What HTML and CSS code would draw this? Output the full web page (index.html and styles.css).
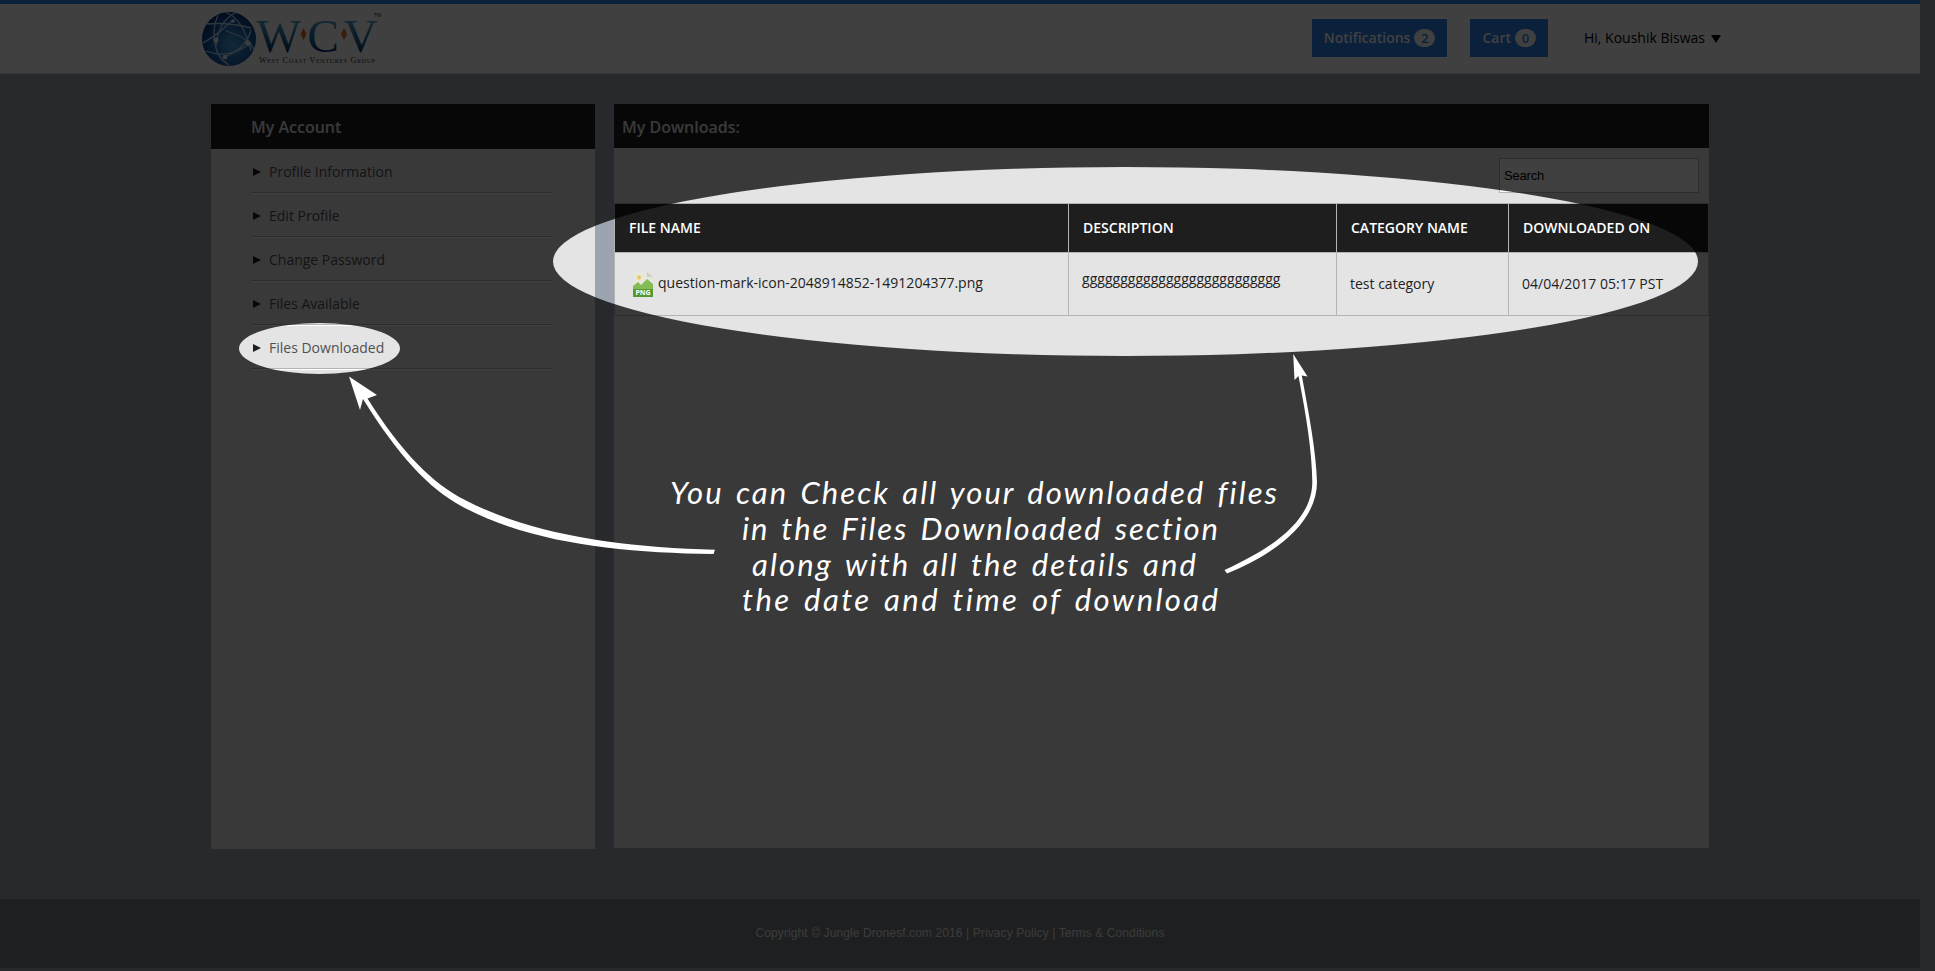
FILE: index.html
```html
<!DOCTYPE html>
<html lang="en">
<head>
<meta charset="utf-8">
<title>My Downloads</title>
<link rel="stylesheet" href="styles.css">
</head>
<body>
<div class="page">
  <header class="header">
    <svg class="logo" width="190" height="60" viewBox="195 8 190 60">
      <defs>
        <radialGradient id="globe" cx="0.55" cy="0.6" r="0.6"><stop offset="0" stop-color="#4aa4e0"/><stop offset="0.6" stop-color="#1d62b0"/><stop offset="1" stop-color="#0c2c70"/></radialGradient>
        <linearGradient id="letters" x1="0" y1="0" x2="0" y2="1"><stop offset="0.2" stop-color="#4aa6cc"/><stop offset="0.8" stop-color="#06366e"/></linearGradient>
      </defs>
      <circle cx="229" cy="39" r="27" fill="url(#globe)"/>
      <g fill="none" stroke="#b9dcf5" stroke-width="1.3">
        <path d="M207 24Q228 22 251 28M218 15Q211 30 216 48Q218 58 229 65M235 13Q218 22 216 46M226 31Q243 36 249 43Q254 48 254 50M225 12Q243 18 251 51M203 43Q216 36 233 20M206 51Q228 60 251 43M224 57Q246 49 251 30"/>
      </g>
      <g fill="#e8f6ff"><circle cx="216" cy="40" r="2.5"/><circle cx="248" cy="43" r="2.5"/><circle cx="225" cy="57" r="2.3"/><circle cx="233" cy="21" r="1.8"/></g>
      <g class="logo-letters" fill="url(#letters)"><text x="256.500" y="52" textLength="45">W</text><text x="307.500" y="52">C</text><text x="343.500" y="52">V</text></g>
      <path d="M303.500 28l3 6-3 6-3-6zM344 28l3 6-3 6-3-6z" fill="#ed6a20"/>
      <text class="logo-tm" x="374" y="17">TM</text>
      <text class="logo-sub" x="259" y="63" textLength="116">West Coast Ventures Group</text>
    </svg>
    <div class="tools">
      <a class="button">Notifications <span class="count">2</span></a>
      <a class="button">Cart <span class="count">0</span></a>
      <span class="user">Hi, Koushik Biswas <i class="caret"></i></span>
    </div>
  </header>
  <main class="content">
    <aside class="account">
      <h2 class="account-title">My Account</h2>
      <ul class="menu">
        <li class="menu-item">Profile Information</li>
        <li class="menu-item">Edit Profile</li>
        <li class="menu-item">Change Password</li>
        <li class="menu-item">Files Available</li>
        <li class="menu-item">Files Downloaded</li>
      </ul>
    </aside>
    <section class="downloads">
      <h2 class="downloads-title">My Downloads:</h2>
      <div class="search-row"><div class="search">Search</div></div>
      <div class="table">
        <div class="row head">
          <div class="cell">FILE NAME</div><div class="cell">DESCRIPTION</div><div class="cell">CATEGORY NAME</div><div class="cell">DOWNLOADED ON</div>
        </div>
        <div class="row body">
          <div class="cell file">
            <svg class="png" width="20" height="25" viewBox="0 0 20 25">
              <path d="M0 0h14l6 5v13H0z" fill="#e7e8dc"/><path d="M14 0v5h6z" fill="#cfcfc6"/>
              <circle cx="6" cy="5.500" r="2" fill="#f3c64c"/>
              <path d="M0 18v-4l5-4 3 3 6-6 6 5v6z" fill="#84bd55"/><path d="M0 17h20v8H0z" fill="#559a31"/>
              <text class="png-label" x="10" y="23.300" text-anchor="middle">PNG</text>
            </svg>
            <span class="file-name">question-mark-icon-2048914852-1491204377.png</span>
          </div>
          <div class="cell desc">gggggggggggggggggggggggggg</div><div class="cell">test category</div><div class="cell">04/04/2017 05:17 PST</div>
        </div>
      </div>
    </section>
  </main>
  <footer class="footer">Copyright © Jungle Dronesf.com 2016 | Privacy Policy | Terms &amp; Conditions</footer>
</div>
<svg class="tour" width="1935" height="971" viewBox="0 0 1935 971">
  <path class="shade" fill-rule="evenodd" d="M0 0H1935V971H0ZM553 261.500a572.500 94.500 0 1 0 1145 0a572.500 94.500 0 1 0 -1145 0ZM239 348.500a80.500 25.500 0 1 0 161 0a80.500 25.500 0 1 0 -161 0Z"/>
  <g class="arrows">
    <path d="M349 376.500L377 395L367.500 398.500C402 453 432 483 465 500C532 535 620 547 715 549.800L713.500 554C620 553 530 543 462 506.500C428 488 398 455 363 399L360 410Z"/>
    <path d="M1293.200 354L1307.500 376.500L1301.800 375.500C1309 415 1316 450 1317 482C1317 520 1280 552 1227 573.500L1224.500 570C1275 547 1312 520 1312.300 482C1312 450 1306 415 1298.500 376L1294.500 380Z"/>
  </g>
  <g class="note">
    <text x="670" y="504" textLength="607">You can Check all your downloaded files</text>
    <text x="742" y="540" textLength="476">in the Files Downloaded section</text>
    <text x="752" y="576" textLength="444">along with all the details and</text>
    <text x="742" y="611" textLength="476">the date and time of download</text>
  </g>
</svg>
</body>
</html>
```

FILE: styles.css
```css
* { box-sizing: border-box; }
body {
  margin: 0;
  height: 971px;
  overflow: hidden;
  background: #9ca4b0;
  font: 14px "Open Sans", sans-serif;
  color: #222;
}
.page { width: 1920px; height: 968px; display: flex; flex-direction: column; }

.header {
  height: 74px;
  border-top: 4px solid #2f80e8;
  border-bottom: 1px solid #e8e8e8;
  background: #fff;
  display: flex;
  justify-content: space-between;
  padding: 4px 199px 0 195px;
}
.logo-letters { font: 47px "Liberation Serif", serif; }
.logo-tm { font: 5px "Liberation Sans", sans-serif; fill: #333; }
.logo-sub { font: 8px "Liberation Serif", serif; font-variant: small-caps; fill: #333; }
.tools { display: flex; align-items: flex-start; padding-top: 11px; }
.button {
  height: 38px;
  padding: 0 12px 1px;
  display: flex;
  align-items: center;
  gap: 4px;
  background: #2f80e8;
  color: #fff;
  font-weight: 600;
  margin-right: 23px;
}
.count {
  width: 21px;
  height: 18px;
  border-radius: 9px;
  background: #fff;
  color: #2f80e8;
  font-size: 13px;
  line-height: 18px;
  text-align: center;
}
.user { height: 37px; display: flex; align-items: center; gap: 6px; margin-left: 13px; color: #000; }
.caret { border: 5px solid transparent; border-top: 8px solid #000; border-bottom: 0; margin-top: 3px; }

.content { display: flex; align-items: flex-start; gap: 19px; padding: 30px 0 0 211px; height: 825px; }
.account { width: 384px; height: 745px; background: #e4e4e4; }
.account-title, .downloads-title {
  margin: 0;
  background: #1e1e1e;
  color: #e4e4e4;
  font-size: 16px;
  font-weight: 600;
}
.account-title { height: 45px; line-height: 47px; padding-left: 40px; }
.menu { list-style: none; margin: 0; padding: 0 42px 0 41px; }
.menu-item {
  height: 44px;
  display: flex;
  align-items: center;
  gap: 8px;
  padding-left: 1px;
  border-bottom: 1px solid #fff;
  box-shadow: inset 0 -1px #b4b4b4;
  color: #505050;
}
.menu-item:first-child { height: 45px; padding-top: 1px; }
.menu-item::before { content: ""; border: 4.5px solid transparent; border-left: 8px solid #1e1e1e; border-right: 0; }

.downloads { width: 1095px; height: 744px; background: #e4e4e4; }
.downloads-title { height: 44px; line-height: 46px; padding-left: 8px; }
.search-row { height: 55px; padding: 10px 10px 0 0; display: flex; justify-content: flex-end; }
.search {
  width: 200px;
  height: 35px;
  border: 1px solid #b4b4b4;
  background: #fff;
  padding-left: 4px;
  font: 13px/33px "Liberation Sans", sans-serif;
  letter-spacing: -0.2px;
  color: #000;
}
.table { border: 1px solid #b4b4b4; }
.row { display: grid; grid-template-columns: 454px 268px 172px 1fr; }
.cell { border-right: 1px solid #b4b4b4; padding-left: 14px; white-space: nowrap; }
.cell:last-child { border-right: 0; }
.head { height: 49px; line-height: 47px; background: #1e1e1e; color: #fff; font-weight: 600; border-bottom: 1px solid #b4b4b4; }
.body { height: 62px; line-height: 62px; }
.body .cell { padding-left: 13px; }
.body .file { display: flex; padding: 19px 0 0 18px; gap: 5px; }
.file-name { line-height: 22px; }
.body .desc { line-height: 52px; letter-spacing: 0.03px; }
.png-label { font: bold 7px "Open Sans", sans-serif; fill: #fff; }

.footer {
  height: 69px;
  background: #797c80;
  color: #e8e8e8;
  font: 12px/68px "Liberation Sans", sans-serif;
  letter-spacing: 0.1px;
  text-align: center;
}

.tour { position: absolute; left: 0; top: 0; }
.shade { fill: #000; fill-opacity: 0.75; }
.arrows { fill: #fff; }
.note { fill: #fff; font: italic 31px Lato, sans-serif; font-variant-ligatures: none; word-spacing: 3px; }
```
